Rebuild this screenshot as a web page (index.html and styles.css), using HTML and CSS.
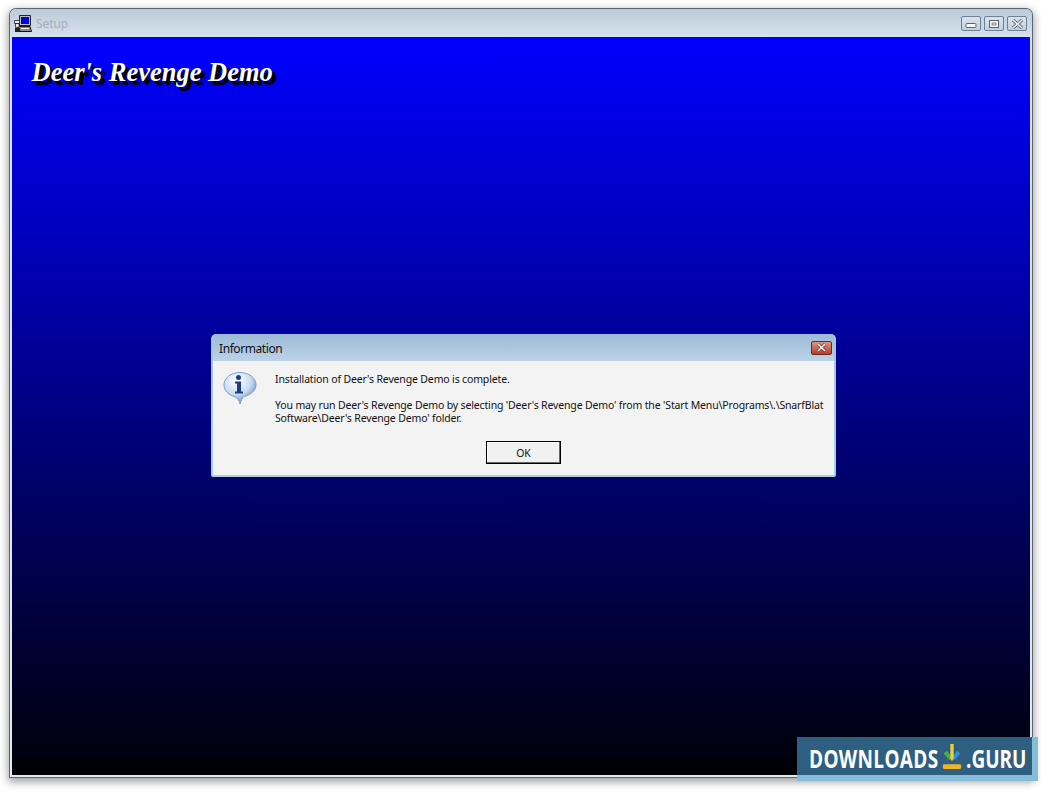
FILE: index.html
```html
<!DOCTYPE html>
<html lang="en">
<head>
<meta charset="utf-8">
<title>Setup</title>
<link rel="stylesheet" href="styles.css">
</head>
<body>
<div class="window">
  <header class="titlebar">
    <svg class="app-icon" width="18" height="18" viewBox="0 0 18 18">
      <path d="M5.500 .5h11v10h-11z" fill="#b8bcc4" stroke="#222"/>
      <path d="M7 2h8v7H7z" fill="#0000d8"/>
      <path d="M4 11.500h12l1.500 5H6z" fill="#8a8a8a" stroke="#111"/>
      <path d="M7 13h8v1H7z" fill="#eee"/>
      <path d="M.5 5.500h5v3h-5zM1.500 8.500h3.500v4h-3.500z" fill="#e8e8e8" stroke="#222" stroke-width=".8"/>
      <path d="M1 13h5v4H1z" fill="#222"/>
    </svg>
    <span class="title-text">Setup</span>
    <div class="win-buttons">
      <span class="win-btn">
        <svg width="12" height="8" viewBox="0 0 12 8"><rect x="1" y="3.500" width="10" height="4" rx="1" fill="#f4f6f8" stroke="#5b6670"/></svg>
      </span>
      <span class="win-btn">
        <svg width="12" height="10" viewBox="0 0 12 10"><rect x="1.500" y="1.500" width="9" height="7" fill="#f4f6f8" stroke="#5b6670"/><rect x="4" y="4" width="4" height="2" fill="#dfe6ec" stroke="#5b6670" stroke-width=".7"/></svg>
      </span>
      <span class="win-btn">
        <svg width="13" height="10" viewBox="0 0 13 10"><path d="M2 1l9 8M11 1L2 9" stroke="#5b6670" stroke-width="3.200"/><path d="M2 1l9 8M11 1L2 9" stroke="#f4f6f8" stroke-width="1.500"/></svg>
      </span>
    </div>
  </header>
  <main class="client">
    <h1 class="product">Deer's Revenge Demo</h1>
    <section class="dialog">
      <div class="dialog-title">
        <span class="dialog-title-text">Information</span>
        <span class="close-btn">
          <svg width="13" height="9" viewBox="0 0 13 9"><path d="M3 1l7 7M10 1L3 8" stroke="#6a2018" stroke-width="2.800"/><path d="M3 1l7 7M10 1L3 8" stroke="#fff" stroke-width="1.600"/></svg>
        </span>
      </div>
      <div class="dialog-body">
        <div class="dialog-content">
          <svg class="info-icon" width="34" height="33" viewBox="0 0 34 33">
            <defs>
              <radialGradient id="bubble" cx="40%" cy="25%" r="80%">
                <stop offset="0" stop-color="#ffffff"/>
                <stop offset=".55" stop-color="#c9dcf2"/>
                <stop offset="1" stop-color="#4f82bc"/>
              </radialGradient>
            </defs>
            <path d="M17 .5C8 .5 1 6 1 13c0 6 5 10 10 11.500 3 1 5 3 6 7.500 1-3 2-6 4-7.500C27 23 33 19 33 13 33 6 26 .5 17 .5z" fill="url(#bubble)" stroke="#7d9fc8"/>
            <circle cx="15.500" cy="5.500" r="2.500" fill="#1c3f7c"/>
            <path d="M12 9.500h6v10h2v2h-8v-2h2v-8h-2z" fill="#1c3f7c"/>
          </svg>
          <div class="message">
            <p>Installation of Deer's Revenge Demo is complete.</p>
            <p>You may run Deer's Revenge Demo by selecting 'Deer's Revenge Demo' from the 'Start Menu\Programs\.\SnarfBlat<br>Software\Deer's Revenge Demo' folder.</p>
          </div>
        </div>
        <div class="dialog-actions"><button class="ok-btn" type="button">OK</button></div>
      </div>
    </section>
  </main>
</div>
<aside class="badge">
  <span class="badge-text badge-downloads">DOWNLOADS</span>
  <svg class="badge-icon" width="20" height="27" viewBox="0 0 24 28" preserveAspectRatio="none">
    <path d="M2 11l7 7 3-3-6-7z" fill="#48b04a"/>
    <path d="M22 11l-7 7-3-3 6-7z" fill="#2f8fd8"/>
    <path d="M10 1h4v15l-2 3-2-3z" fill="#f2cf3a"/>
    <rect x="1" y="22" width="22" height="5" rx="1.500" fill="#f0b429"/>
  </svg>
  <span class="badge-text badge-guru">.GURU</span>
</aside>
</body>
</html>
```
FILE: styles.css
```css
html, body {
  margin: 0;
  height: 792px;
  overflow: hidden;
  background: #fff;
}
body {
  padding: 9px 0 0 10px;
  box-sizing: border-box;
  position: relative;
}
.window {
  width: 1022px;
  height: 768px;
  box-sizing: border-box;
  display: flex;
  flex-direction: column;
  padding: 0 2px 2px;
  border-radius: 6px 6px 0 0;
  background: linear-gradient(#bccbd9 0, #d6e2ec 28px, #e2eaf1 100%);
  box-shadow: 0 0 0 1px #5d6670, 0 3px 9px 2px rgba(0, 0, 0, .38);
}
.titlebar {
  height: 28px;
  flex: none;
  display: flex;
  align-items: center;
  gap: 4px;
  padding: 0 3px 0 2px;
}
.app-icon { flex: none; margin-top: 2px; }
.title-text {
  font: 12px "Noto Sans", sans-serif;
  letter-spacing: -.1px;
  color: #a4afb8;
  margin-top: 1px;
}
.win-buttons {
  margin-left: auto;
  display: flex;
  gap: 3px;
  margin-top: 1px;
}
.win-btn {
  width: 18px;
  height: 13px;
  border: 1px solid #6f8192;
  border-radius: 2px;
  background: linear-gradient(#d9e3ec, #c2d0dc);
  display: flex;
  align-items: center;
  justify-content: center;
}
.client {
  flex: 1;
  position: relative;
  background: linear-gradient(#0000ff 0, #000010 97%, #000 100%);
}
.product {
  margin: 0;
  padding: 20px 0 0 19.500px;
  font: italic bold 26.500px/30px "Liberation Serif", serif;
  color: #fff;
  text-shadow: 3px 3px 1px #000, 4px 4px 1px #000;
}
.dialog {
  position: absolute;
  left: 199px;
  top: 297px;
  width: 625px;
  height: 143px;
  box-sizing: border-box;
  display: flex;
  flex-direction: column;
  padding: 0 2px 2px;
  border-radius: 5px 5px 2px 2px;
  background: linear-gradient(#a8c2dc, #9fd4e2);
}
.dialog-title {
  height: 27px;
  flex: none;
  display: flex;
  align-items: center;
  padding: 0 2px 0 6px;
  background: linear-gradient(#9dbad7, #bcd2e7);
  border-radius: 5px 5px 0 0;
}
.dialog-title-text {
  font: 12px "Noto Sans", sans-serif;
  letter-spacing: -.42px;
  color: #111;
  margin-top: 2px;
}
.close-btn {
  margin-left: auto;
  width: 19px;
  height: 12px;
  border: 1px solid #6a2a22;
  border-radius: 2px;
  background: linear-gradient(#dc9488, #b83c2c);
  display: flex;
  align-items: center;
  justify-content: center;
}
.dialog-body {
  flex: 1;
  background: #f3f3f3;
  display: flex;
  flex-direction: column;
}
.dialog-content {
  display: flex;
  gap: 18px;
  padding: 11px 0 0 10px;
}
.info-icon { flex: none; }
.message {
  font: 10.500px/13px "Noto Sans", sans-serif;
  letter-spacing: -.15px;
  color: #111;
  padding-top: 1px;
  white-space: nowrap;
}
.message p { margin: 0 0 13px; }
.dialog-actions {
  margin-top: 3px;
  display: flex;
  justify-content: center;
}
.ok-btn {
  width: 75px;
  height: 23px;
  padding: 0;
  background: #f1f1f1;
  border: 1px solid #000;
  box-shadow: inset -1px -1px 0 #666, inset 1px 1px 0 #fff;
  font: 10.500px "Noto Sans", sans-serif;
  color: #111;
}
.badge {
  position: absolute;
  left: 797px;
  top: 737px;
  width: 223px;
  height: 38px;
  padding-left: 12px;
  display: flex;
  align-items: center;
  gap: 4px;
  background: #2e5f80;
  border-right: 6px solid #86bcd8;
  border-bottom: 6px solid #86bcd8;
}
.badge-text {
  flex: none;
  display: block;
  height: 38px;
  margin-top: 4px;
  font: 700 25px/38px "Open Sans", sans-serif;
  color: #fff;
  white-space: nowrap;
  transform: scaleX(.76);
  transform-origin: left center;
}
.badge-downloads { width: 129px; letter-spacing: .44px; }
.badge-guru { width: 60px; }
.badge-icon { flex: none; }
```
